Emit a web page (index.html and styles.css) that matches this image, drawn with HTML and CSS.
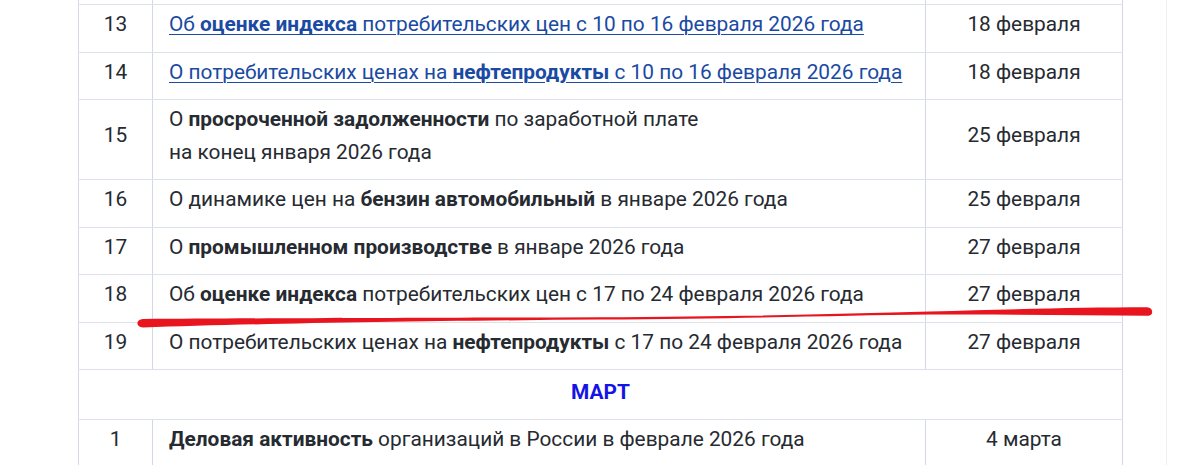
FILE: index.html
```html
<!DOCTYPE html>
<html lang="ru">
<head>
<meta charset="utf-8">
<title>План публикаций</title>
<link rel="stylesheet" href="styles.css">
</head>
<body>
<div class="page">
  <div class="content">
    <table class="plan">
      <colgroup>
        <col class="c-num">
        <col class="c-title">
        <col class="c-date">
      </colgroup>
      <tbody>
        <tr class="stub"><td></td><td></td><td></td></tr>
        <tr>
          <td class="num">13</td>
          <td class="title"><a href="#">Об <b>оценке индекса</b> потребительских цен с 10 по 16 февраля 2026 года</a></td>
          <td class="date">18 февраля</td>
        </tr>
        <tr>
          <td class="num">14</td>
          <td class="title"><a href="#">О потребительских ценах на <b>нефтепродукты</b> с 10 по 16 февраля 2026 года</a></td>
          <td class="date">18 февраля</td>
        </tr>
        <tr>
          <td class="num">15</td>
          <td class="title">О <b>просроченной задолженности</b> по заработной плате<br>на конец января 2026 года</td>
          <td class="date">25 февраля</td>
        </tr>
        <tr>
          <td class="num">16</td>
          <td class="title">О динамике цен на <b>бензин автомобильный</b> в январе 2026 года</td>
          <td class="date">25 февраля</td>
        </tr>
        <tr>
          <td class="num">17</td>
          <td class="title">О <b>промышленном производстве</b> в январе 2026 года</td>
          <td class="date">27 февраля</td>
        </tr>
        <tr>
          <td class="num">18</td>
          <td class="title">Об <b>оценке индекса</b> потребительских цен с 17 по 24 февраля 2026 года</td>
          <td class="date">27 февраля</td>
        </tr>
        <tr>
          <td class="num">19</td>
          <td class="title">О потребительских ценах на <b>нефтепродукты</b> с 17 по 24 февраля 2026 года</td>
          <td class="date">27 февраля</td>
        </tr>
        <tr class="month">
          <td colspan="3">МАРТ</td>
        </tr>
        <tr>
          <td class="num">1</td>
          <td class="title"><b>Деловая активность</b> организаций в России в феврале 2026 года</td>
          <td class="date">4 марта</td>
        </tr>
      </tbody>
    </table>
  </div>
  <div class="side"></div>
</div>
<svg class="marker" width="1200" height="465" viewBox="0 0 1200 465" aria-hidden="true">
  <path d="M143 319 C 250 318.2, 420 317.8, 600 317.2 C 740 316.5, 840 314, 930 311.5 C 1010 309.5, 1080 307.3, 1147 307.3 C 1153.5 307.6, 1154 315.8, 1148 315.8 C 1080 315.2, 1010 314.2, 930 314.6 C 840 315.6, 740 318.6, 600 319.6 C 420 320.8, 250 323.8, 143 327.5 C 135.5 327.5, 135.5 319.3, 143 319 Z" fill="#e8141e"/>
</svg>
</body>
</html>
```

FILE: styles.css
```css
html, body {
  margin: 0;
  padding: 0;
  background: #ffffff;
}

body {
  font-family: Roboto, "Noto Sans", "DejaVu Sans", sans-serif;
  font-size: 20.85px;
  color: #262a31;
  width: 1200px;
  height: 465px;
  overflow: hidden;
  position: relative;
}

.page {
  display: flex;
  padding-left: 78px;
}

.content {
  width: 1045px;
}

.side {
  width: 43px;
  border-right: 1px solid #f1f1f3;
  height: 465px;
}

.plan {
  width: 1045px;
  border-collapse: collapse;
  table-layout: fixed;
}

.c-num { width: 74px; }
.c-date { width: 197px; }

.plan td {
  border-left: 1px solid #d3d8e6;
  border-right: 1px solid #d3d8e6;
  border-top: 1.5px solid #dde1eb;
  border-bottom: 1.5px solid #dde1eb;
  padding: 3px 16px 11px;
  line-height: 32.5px;
  vertical-align: middle;
}

.plan tr.stub td {
  height: 4px;
  padding: 0;
  line-height: 0;
  border-top: none;
}

.num {
  text-align: center;
}

.date {
  text-align: center;
}

.title b {
  font-weight: 700;
}

.title a {
  color: #1a4aa3;
  text-decoration: underline;
  text-decoration-thickness: 1px;
  text-underline-offset: 3px;
}

.plan .month td {
  text-align: center;
  font-weight: 700;
  color: #1414e6;
  padding: 6px 16px 10px;
}

.marker {
  position: absolute;
  left: 0;
  top: 0;
  pointer-events: none;
}
```
